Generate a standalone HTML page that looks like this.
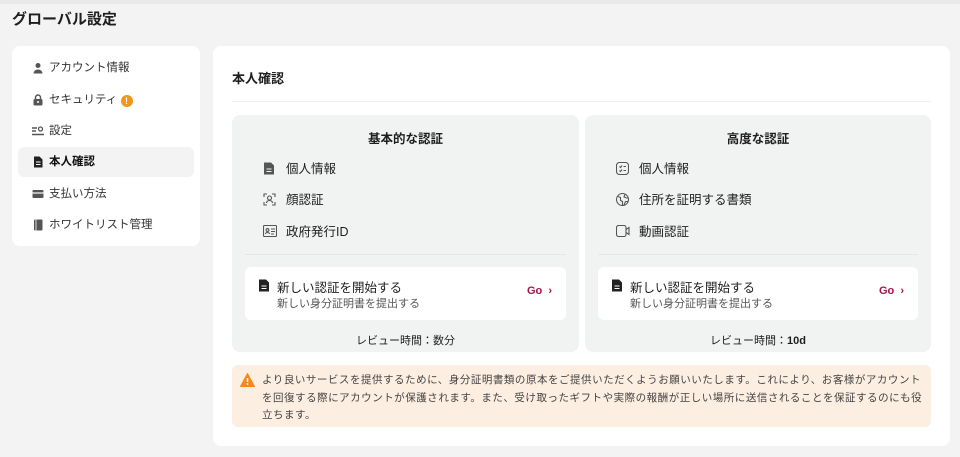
<!DOCTYPE html>
<html><head><meta charset="utf-8"><style>
*{box-sizing:border-box;margin:0;padding:0}
body{width:960px;height:457px;background:#f3f3f3;font-family:"Liberation Sans","Noto Sans CJK JP",sans-serif;color:#1e1e1e;position:relative;overflow:hidden}
.top{position:absolute;left:0;top:0;width:960px;height:4px;background:#e9e9e9}
h1{position:absolute;left:12px;top:10px;font-size:15px;font-weight:700;line-height:20px}
.side{position:absolute;left:12px;top:46px;width:188px;height:200px;background:#fff;border-radius:8px}
.it{position:absolute;left:6px;width:176px;height:30px;border-radius:6px;font-size:11.5px;line-height:30px;padding-left:31px;color:#333}
.it.act{background:#f3f3f3;font-weight:700;color:#111}
.ic{position:absolute;left:14px;top:9px;width:12px;height:12px}
.main{position:absolute;left:213px;top:46px;width:737px;height:400px;background:#fff;border-radius:8px}
.mt{position:absolute;left:19px;top:22px;font-size:13px;font-weight:700}
.hr{position:absolute;left:19px;top:55px;width:699px;height:1px;background:#eee}
.card{position:absolute;top:69px;width:347px;height:237px;background:#f1f2f2;border-radius:8px}
.ct{position:absolute;top:13px;width:100%;text-align:center;font-size:12.5px;font-weight:700}
.li{position:absolute;left:54px;font-size:12.5px;line-height:16px}
.li svg{position:absolute;left:-23px;top:1px}
.cd{position:absolute;left:13px;top:139px;width:321px;height:1px;background:#e6e6e6}
.wc{position:absolute;left:13px;top:152px;width:321px;height:53px;background:#fff;border-radius:6px}
.wc .a{position:absolute;left:32px;top:10px;font-size:12.5px}
.wc .b{position:absolute;left:32px;top:28px;font-size:11px;color:#555}
.wc .go{position:absolute;right:14px;top:18px;font-size:11px;font-weight:700;color:#a4124a}
.rv{position:absolute;top:217px;width:100%;text-align:center;font-size:11px}
.note{position:absolute;left:19px;top:319px;width:699px;height:62px;background:#fdeee2;border-radius:6px;font-size:10.5px;line-height:17.5px;color:#444;padding:7px 0 0 30px;letter-spacing:0.52px;white-space:nowrap}
</style></head><body>
<div class="top"></div>
<h1>グローバル設定</h1>
<div class="side">
<div class="it" style="top:7px"><svg class="ic" viewBox="0 0 12 12"><circle cx="6" cy="3.5" r="2.5" fill="#555"/><path d="M1.5 11.5a4.5 4 0 0 1 9 0z" fill="#555"/></svg>アカウント情報</div>
<div class="it" style="top:39px"><svg class="ic" viewBox="0 0 12 12"><path d="M3.5 5V3.5a2.5 2.5 0 0 1 5 0V5" stroke="#555" stroke-width="1.4" fill="none"/><rect x="1.5" y="5" width="9" height="6.5" rx="1.5" fill="#555"/><circle cx="6" cy="8" r="1" fill="#fff"/></svg>セキュリティ <span style="display:inline-block;width:12px;height:12px;border-radius:50%;background:#f0961c;color:#fff;font-size:9px;line-height:12px;text-align:center;font-weight:700;vertical-align:-1px">!</span></div>
<div class="it" style="top:70px"><svg class="ic" viewBox="0 0 12 12"><path d="M0 3h5M0 6h4M0 9.5h12" stroke="#555" stroke-width="1.4"/><circle cx="8.5" cy="4" r="2" stroke="#555" stroke-width="1.3" fill="none"/></svg>設定</div>
<div class="it act" style="top:101px"><svg class="ic" viewBox="0 0 12 12"><path d="M2 0.5h5.5l3 3V11.5H2z" fill="#222"/><path d="M4 6h4.5M4 8.5h4.5" stroke="#fff" stroke-width="1"/></svg>本人確認</div>
<div class="it" style="top:133px"><svg class="ic" viewBox="0 0 12 12"><rect x="0.5" y="2" width="11" height="8" rx="1" fill="#555"/><path d="M0.5 5h11" stroke="#fff" stroke-width="1.2"/></svg>支払い方法</div>
<div class="it" style="top:164px"><svg class="ic" viewBox="0 0 12 12"><rect x="2" y="0.5" width="8.5" height="11" rx="1" fill="#555"/><path d="M4 0.5v11" stroke="#fff" stroke-width="0.8"/></svg>ホワイトリスト管理</div>
</div>
<div class="main">
<div class="mt">本人確認</div>
<div class="hr"></div>
<div class="card" style="left:19px">
<div class="ct">基本的な認証</div>
<div class="li" style="top:46px"><svg width="12" height="13" viewBox="0 0 12 13"><path d="M1 0.5h7l3 3v9H1z" fill="#555"/><path d="M3.5 7h5M3.5 9.5h5" stroke="#f1f2f2" stroke-width="1.1"/></svg>個人情報</div>
<div class="li" style="top:77px"><svg width="13" height="13" viewBox="0 0 13 13" fill="none" stroke="#555" stroke-width="1.1"><path d="M1 4V1h3M9 1h3v3M12 9v3H9M4 12H1V9"/><circle cx="6.5" cy="5" r="2"/><path d="M3.5 10a3 2.5 0 0 1 6 0"/></svg>顔認証</div>
<div class="li" style="top:109px"><svg width="14" height="12" viewBox="0 0 14 12" fill="none" stroke="#555" stroke-width="1.1"><rect x="0.5" y="0.5" width="13" height="11" rx="1"/><circle cx="4.5" cy="5" r="1.4"/><path d="M2.5 9a2 1.5 0 0 1 4 0M8 4h4M8 6.5h4M8 9h3"/></svg>政府発行ID</div>
<div class="cd"></div>
<div class="wc"><svg style="position:absolute;left:13px;top:12px" width="12" height="13" viewBox="0 0 12 13"><path d="M1 0.5h7l3 3v9H1z" fill="#222"/><path d="M3.5 7h5M3.5 9.5h5" stroke="#fff" stroke-width="1.1"/></svg><div class="a">新しい認証を開始する</div><div class="b">新しい身分証明書を提出する</div><div class="go">Go &nbsp;›</div></div>
<div class="rv">レビュー時間：数分</div>
</div>
<div class="card" style="left:372px;width:346px">
<div class="ct">高度な認証</div>
<div class="li" style="top:46px"><svg width="13" height="13" viewBox="0 0 13 13" fill="none" stroke="#555" stroke-width="1.1"><rect x="0.5" y="0.5" width="12" height="12" rx="3"/><path d="M3.5 4.5l1 1 1.5-2M3.5 8.5l1 1 1.5-2M7.5 4.5h2.5M7.5 8.5h2.5"/></svg>個人情報</div>
<div class="li" style="top:77px"><svg width="13" height="13" viewBox="0 0 13 13" fill="none" stroke="#555" stroke-width="1.1"><circle cx="6.5" cy="6.5" r="6"/><path d="M2 3.5l2.5 1v3l2 1v3.5M9 1.5l-1 2.5 2.5 1 2 0M8 12l1.5-3.5 2.5 0"/></svg>住所を証明する書類</div>
<div class="li" style="top:109px"><svg width="14" height="12" viewBox="0 0 14 12" fill="none" stroke="#555" stroke-width="1.1"><rect x="0.5" y="0.5" width="9.5" height="11" rx="2"/><path d="M10 4.5l3-2v7l-3-2"/></svg>動画認証</div>
<div class="cd" style="width:320px"></div>
<div class="wc" style="width:320px"><svg style="position:absolute;left:13px;top:12px" width="12" height="13" viewBox="0 0 12 13"><path d="M1 0.5h7l3 3v9H1z" fill="#222"/><path d="M3.5 7h5M3.5 9.5h5" stroke="#fff" stroke-width="1.1"/></svg><div class="a">新しい認証を開始する</div><div class="b">新しい身分証明書を提出する</div><div class="go">Go &nbsp;›</div></div>
<div class="rv">レビュー時間：<b>10d</b></div>
</div>
<div class="note"><svg style="position:absolute;left:8px;top:8px" width="15" height="14" viewBox="0 0 15 14"><path d="M7.5 0.5L14.5 13.5H0.5z" fill="#f08a1c" stroke="#f08a1c" stroke-linejoin="round"/><path d="M7.5 5v4" stroke="#fff" stroke-width="1.5"/><circle cx="7.5" cy="11" r="0.9" fill="#fff"/></svg>より良いサービスを提供するために、身分証明書類の原本をご提供いただくようお願いいたします。これにより、お客様がアカウント<br>を回復する際にアカウントが保護されます。また、受け取ったギフトや実際の報酬が正しい場所に送信されることを保証するのにも役<br>立ちます。</div>
</div>
</body></html>
